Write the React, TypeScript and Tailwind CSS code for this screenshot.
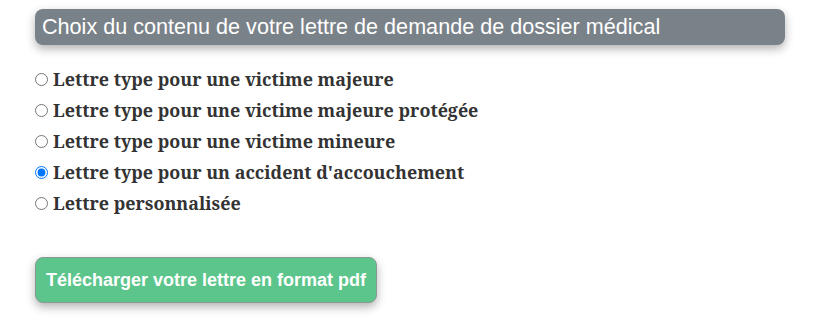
import React from "react";

const options = [
  "Lettre type pour une victime majeure",
  "Lettre type pour une victime majeure protégée",
  "Lettre type pour une victime mineure",
  "Lettre type pour un accident d'accouchement",
  "Lettre personnalisée",
];

export default function App() {
  return (
    <div className="w-[818px] h-[332px] bg-white px-[35px] pt-[9px] overflow-hidden">
      <div className="w-[750px] h-[36px] rounded-[8px] bg-[#7a8289] shadow-[0_4px_10px_rgba(0,0,0,0.3)] flex items-center px-[7px]">
        <span className="text-white text-[21.6px] leading-none font-['Liberation_Sans',sans-serif]">
          Choix du contenu de votre lettre de demande de dossier médical
        </span>
      </div>
      <div className="mt-[19px] flex flex-col">
        {options.map((o, i) => (
          <label key={o} className="h-[31px] flex items-center gap-[5px]">
            <input
              type="radio"
              name="lettre"
              defaultChecked={i === 3}
              className="m-0 w-[13px] h-[13px] accent-[#0075ff]"
            />
            <span className="text-[17.9px] font-bold text-[#333] font-['Noto_Serif','DejaVu_Serif',serif]">
              {o}
            </span>
          </label>
        ))}
      </div>
      <button className="mt-[38px] h-[46px] w-[342px] rounded-[8px] bg-[#5cc58b] border border-[#8a9a90] shadow-[0_4px_10px_rgba(0,0,0,0.3)] text-white font-bold text-[18px] font-['Liberation_Sans',sans-serif]">
        Télécharger votre lettre en format pdf
      </button>
    </div>
  );
}
